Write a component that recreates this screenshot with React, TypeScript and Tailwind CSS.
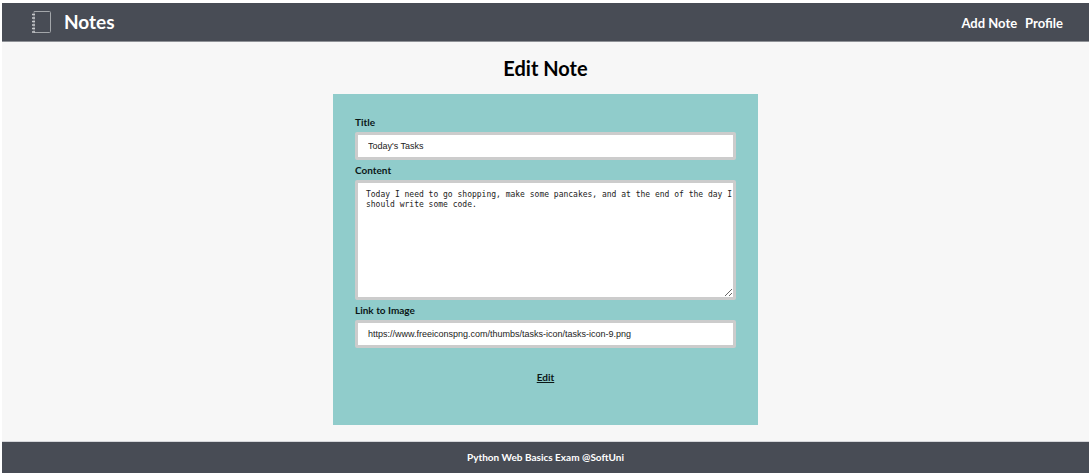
function NotebookIcon() {
  return (
    <svg className="h-6 w-5" viewBox="0 0 20 24" fill="none" aria-hidden="true">
      <path d="M3 1.5H18.5Q19.5 1.5 19.5 2.5V21.5Q19.5 22.5 18.5 22.5H3" stroke="#a3a6aa" strokeWidth="1" />
      <path d="M3 1.5V22.5" stroke="#83868c" strokeWidth="1" />
      <path d="M1 4.5H4M1 8H4M1 11.5H4M1 15H4M1 18.5H4M1 22H4" stroke="#c6c8cb" strokeWidth="1.4" />
    </svg>
  );
}

const field =
  "block w-full rounded-xs border-[3px] border-[#cccccc] bg-white text-[#222222] outline-none";
const label = "block text-[10px] leading-3 font-bold text-[#0b1717]";

export default function App() {
  return (
    <div className="flex min-h-screen flex-col bg-white px-0.5 pt-[3px] pb-0.5 font-['Lato',sans-serif]">
      <header className="flex h-[39px] items-center justify-between border-b border-[#8e9196] bg-[#484c55] pr-[26px] pl-[29px] text-white">
        <a href="#" className="flex items-center gap-[13px] text-[19px] font-bold">
          <NotebookIcon />
          Notes
        </a>
        <nav className="flex gap-2 pt-1 text-[13px] font-bold">
          <a href="#add">Add Note</a>
          <a href="#profile">Profile</a>
        </nav>
      </header>

      <main className="flex flex-1 flex-col items-center bg-[#f7f7f7] pb-4">
        <h1 className="pt-3 pb-3 text-xl leading-7 font-bold text-black">Edit Note</h1>
        <form className="w-[39.1%] flex-1 bg-[#90cccb] px-[22px] pt-[22px] pb-9">
          <label htmlFor="title" className={label}>Title</label>
          <input
            id="title"
            type="text"
            defaultValue="Today's Tasks"
            className={`${field} mt-1 h-7 pl-2.5 font-['Liberation_Sans',sans-serif] text-[9px]`}
          />
          <label htmlFor="content" className={`${label} mt-1`}>Content</label>
          <textarea
            id="content"
            defaultValue="Today I need to go shopping, make some pancakes, and at the end of the day I should write some code."
            className={`${field} mt-1 h-[120px] resize pt-[7px] pl-2 font-['DejaVu_Sans_Mono',monospace] text-[8px] leading-[10px]`}
          />
          <label htmlFor="image" className={`${label} mt-1`}>Link to Image</label>
          <input
            id="image"
            type="text"
            defaultValue="https://www.freeiconspng.com/thumbs/tasks-icon/tasks-icon-9.png"
            className={`${field} mt-1 h-7 pl-2.5 font-['Liberation_Sans',sans-serif] text-[9px]`}
          />
          <button type="submit" className="mx-auto mt-[22px] block text-[10px] leading-[14px] font-bold text-[#0b1717] underline">
            Edit
          </button>
        </form>
      </main>

      <footer className="flex h-8 items-center justify-center border-t border-[#d5d6da] bg-[#484c55] text-[10px] font-bold text-white">
        Python Web Basics Exam @SoftUni
      </footer>
    </div>
  );
}
